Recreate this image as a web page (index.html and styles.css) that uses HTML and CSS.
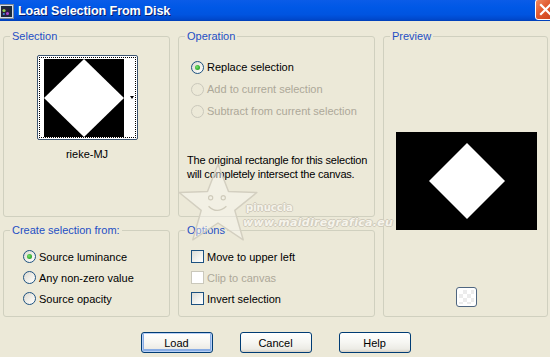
FILE: index.html
```html
<!DOCTYPE html>
<html>
<head>
<meta charset="utf-8">
<link rel="stylesheet" href="styles.css">
</head>
<body>
<div class="window">
  <div class="titlebar">
    <svg class="app-icon" width="15" height="15" viewBox="0 0 15 15">
      <rect x="0.5" y="0.5" width="14" height="14" fill="#d8dde6" stroke="#7a8797"/>
      <rect x="2" y="2" width="11" height="11" fill="#1a2a3a"/>
      <circle cx="6.5" cy="8" r="4.5" fill="#2b1f3d"/>
      <circle cx="5" cy="6.5" r="1.6" fill="#8fd14f"/>
      <circle cx="8.5" cy="9.5" r="1.5" fill="#b04ad0"/>
      <circle cx="4.8" cy="10" r="1.1" fill="#3d8fe0"/>
    </svg>
    <span class="title">Load Selection From Disk</span>
    <div class="close">
      <svg width="21" height="21" viewBox="0 0 21 21">
        <path d="M6 6 L15 15 M15 6 L6 15" stroke="#fff" stroke-width="2.2" stroke-linecap="square"/>
      </svg>
    </div>
  </div>

  <div class="content">
    <fieldset class="group g-selection">
      <legend>Selection</legend>
      <div class="thumb">
        <div class="focus">
          <svg width="80" height="78" viewBox="0 0 80 78">
            <rect width="80" height="78" fill="#000"/>
            <polygon points="40,0 80,39 40,78 0,39" fill="#fff"/>
          </svg>
          <span class="arrow"></span>
        </div>
      </div>
      <div class="thumb-name">rieke-MJ</div>
    </fieldset>

    <fieldset class="group g-operation">
      <legend>Operation</legend>
      <div class="opts">
        <div class="opt"><span class="radio checked"></span>Replace selection</div>
        <div class="opt disabled"><span class="radio"></span>Add to current selection</div>
        <div class="opt disabled"><span class="radio"></span>Subtract from current selection</div>
      </div>
      <p class="info">The original rectangle for this selection<br>will completely intersect the canvas.</p>
    </fieldset>

    <fieldset class="group g-preview">
      <legend>Preview</legend>
      <svg class="preview-img" width="141" height="98" viewBox="0 0 141 98">
        <rect width="141" height="98" fill="#000"/>
        <polygon points="71,11 109,49 71,87 33,49" fill="#fff"/>
      </svg>
      <div class="mini-btn"><span class="checker"></span></div>
    </fieldset>

    <fieldset class="group g-create">
      <legend>Create selection from:</legend>
      <div class="opts small">
        <div class="opt"><span class="radio checked"></span>Source luminance</div>
        <div class="opt"><span class="radio"></span>Any non-zero value</div>
        <div class="opt"><span class="radio"></span>Source opacity</div>
      </div>
    </fieldset>

    <fieldset class="group g-options">
      <legend>Options</legend>
      <div class="opts small">
        <div class="opt"><span class="check"></span>Move to upper left</div>
        <div class="opt disabled"><span class="check"></span>Clip to canvas</div>
        <div class="opt"><span class="check"></span>Invert selection</div>
      </div>
    </fieldset>
  </div>

  <div class="buttons">
    <button class="btn default">Load</button>
    <button class="btn">Cancel</button>
    <button class="btn">Help</button>
  </div>

  <div class="watermark">
    <svg class="wm-star" width="84" height="84" viewBox="0 0 80 80">
      <path d="M40 4 L50 30 L77 31 L56 48 L64 76 L40 60 L16 76 L24 48 L3 31 L30 30 Z" fill="rgba(250,249,244,0.45)" stroke="#d3cfc0" stroke-width="1.4" stroke-linejoin="round"/>
      <circle cx="33" cy="36" r="2" fill="none" stroke="#cfcbbb" stroke-width="1.1"/>
      <circle cx="45" cy="36" r="2" fill="none" stroke="#cfcbbb" stroke-width="1.1"/>
      <path d="M31 44 Q39 52 48 44" fill="none" stroke="#cfcbbb" stroke-width="1.2"/>
    </svg>
    <span class="wm-name">pinuccia</span>
    <span class="wm-url">www.maidiregrafica.eu</span>
  </div>
</div>
</body>
</html>
```

FILE: styles.css
```css
html, body {
  margin: 0;
  padding: 0;
}
body {
  background: #ECE9D8;
  font-family: "Liberation Sans", Arial, sans-serif;
  font-size: 11px;
  color: #000;
  width: 550px;
  height: 357px;
  overflow: hidden;
}
.window {
  position: relative;
  width: 550px;
  height: 357px;
}
.titlebar {
  height: 21px;
  display: flex;
  align-items: center;
  overflow: hidden;
  background: linear-gradient(#0A5CE8 0%, #0058E6 35%, #0054E0 70%, #0048CC 92%, #003DB5 100%);
}
.app-icon {
  flex: none;
  margin-left: -1px;
  margin-top: 1px;
}
.title {
  margin-left: 4px;
  color: #fff;
  font-family: "Liberation Sans", Arial, sans-serif;
  font-weight: bold;
  font-size: 12.6px;
  letter-spacing: -0.1px;
  text-shadow: 1px 1px 0 #0A1E6E;
}
.close {
  margin-left: auto;
  margin-right: -6px;
  align-self: flex-start;
  margin-top: -1px;
  width: 21px;
  height: 21px;
  box-sizing: border-box;
  border: 1px solid #fff;
  border-radius: 3px;
  background: linear-gradient(135deg, #F08A62 0%, #E0582E 45%, #C9401C 100%);
  display: flex;
}
.close svg {
  margin: -1px;
}

.content {
  display: grid;
  grid-template-columns: 167px 197px 165px;
  grid-template-rows: 187px 93px;
  column-gap: 8px;
  row-gap: 7px;
  padding: 9px 0 0 3px;
}
.group {
  margin: 0;
  padding: 0;
  min-width: 0;
  border: 1px solid #D0D0BF;
  border-radius: 3px;
  box-sizing: border-box;
}
.group legend {
  margin-left: 6px;
  padding: 0 2px;
  color: #1F4FC4;
  font-size: 11px;
  line-height: 13px;
}
.g-selection {
  grid-column: 1;
  grid-row: 1;
  display: flex;
  flex-direction: column;
  align-items: center;
}
.g-operation {
  grid-column: 2;
  grid-row: 1;
}
.g-preview {
  grid-column: 3;
  grid-row: 1 / span 2;
  display: flex;
  flex-direction: column;
  align-items: center;
}
.g-create {
  grid-column: 1;
  grid-row: 2;
}
.g-options {
  grid-column: 2;
  grid-row: 2;
}

.thumb {
  margin-top: 12px;
  margin-left: 1px;
  width: 101px;
  height: 85px;
  box-sizing: border-box;
  border: 1px solid #3C5470;
  border-radius: 2px;
  background: #fff;
  padding: 1px;
}
.focus {
  height: 100%;
  box-sizing: border-box;
  border: 1px dotted #000;
  display: flex;
  align-items: center;
  padding-left: 4px;
}
.focus svg {
  display: block;
  flex: none;
}
.arrow {
  margin-left: auto;
  margin-right: 1px;
  width: 0;
  height: 0;
  border-top: 3px solid #000;
  border-left: 2.5px solid transparent;
  border-right: 2.5px solid transparent;
}
.thumb-name {
  margin-top: 8px;
  margin-left: 1px;
  line-height: 13px;
}

.opts {
  display: flex;
  flex-direction: column;
}
.g-operation .opts {
  margin-top: 13px;
  padding-left: 12px;
}
.opt {
  display: flex;
  align-items: center;
  height: 22px;
  white-space: nowrap;
}
.opts.small .opt {
  height: 21px;
}
.g-create .opts {
  margin-top: 9px;
  padding-left: 19px;
}
.g-options .opts {
  margin-top: 9px;
  padding-left: 12px;
}
.opt.disabled {
  color: #ACA899;
}
.radio {
  flex: none;
  width: 13px;
  height: 13px;
  box-sizing: border-box;
  border: 1px solid #1C5180;
  border-radius: 50%;
  background: linear-gradient(135deg, #DCD9CF 0%, #F2F1EC 60%, #FFFFFF 100%);
  margin-right: 3px;
  display: flex;
  align-items: center;
  justify-content: center;
}
.radio.checked::after {
  content: "";
  width: 5px;
  height: 5px;
  border-radius: 50%;
  background: radial-gradient(circle at 40% 40%, #7BE26A 0%, #3CB43A 50%, #1E8E1E 100%);
}
.disabled .radio {
  border-color: #CAC8BB;
  background: #ECE9D8;
}
.check {
  flex: none;
  width: 13px;
  height: 13px;
  box-sizing: border-box;
  border: 1px solid #1C5180;
  background: linear-gradient(135deg, #DCDCD6 0%, #F4F4F0 60%, #FFFFFF 100%);
  margin-right: 3px;
}
.disabled .check {
  border-color: #CAC8BB;
  background: #fff;
}
.info {
  margin: 31px 0 0 8px;
  line-height: 14px;
  white-space: nowrap;
  letter-spacing: -0.2px;
}

.preview-img {
  display: block;
  margin-top: 89px;
  margin-left: 1px;
}
.mini-btn {
  margin-top: 57px;
  margin-left: 1px;
  width: 21px;
  height: 20px;
  box-sizing: border-box;
  border: 1px solid #4F6680;
  border-radius: 3px;
  background: #fff;
  padding: 2px;
}
.checker {
  display: block;
  width: 100%;
  height: 100%;
  background: repeating-conic-gradient(#ECECEC 0 25%, #FFFFFF 0 50%) 0 0 / 8px 8px;
}

.buttons {
  display: flex;
  justify-content: center;
  gap: 27px;
  margin-top: 15px;
  padding-left: 1px;
}
.btn {
  width: 72px;
  height: 21px;
  box-sizing: border-box;
  border: 1px solid #003C74;
  border-radius: 3px;
  background: linear-gradient(#FFFFFF 0%, #F6F6F2 50%, #ECEBE5 85%, #D6D0C5 100%);
  font-family: "Liberation Sans", Arial, sans-serif;
  font-size: 11px;
  color: #000;
  padding: 0;
}
.btn.default {
  box-shadow: inset 0 0 0 1px #B8D0F6, inset 0 -1px 0 2px #89ADE4;
}

.watermark {
  position: absolute;
  left: 0;
  top: 0;
  width: 550px;
  height: 357px;
  pointer-events: none;
}
.wm-star {
  position: absolute;
  left: 176px;
  top: 160px;
}
.wm-name {
  position: absolute;
  left: 246px;
  top: 202px;
  font-family: "DejaVu Sans", sans-serif;
  font-weight: bold;
  font-size: 10px;
  color: #F6F4EC;
  text-shadow: 1px 0 0 #CFCABB, -1px 0 0 #CFCABB, 0 1px 0 #CFCABB, 0 -1px 0 #CFCABB;
}
.wm-url {
  position: absolute;
  left: 243px;
  top: 216px;
  font-family: "DejaVu Sans", sans-serif;
  font-weight: bold;
  font-style: italic;
  font-size: 11px;
  letter-spacing: 0.3px;
  color: #F6F4EC;
  text-shadow: 1px 0 0 #CFCABB, -1px 0 0 #CFCABB, 0 1px 0 #CFCABB, 0 -1px 0 #CFCABB;
}
```
